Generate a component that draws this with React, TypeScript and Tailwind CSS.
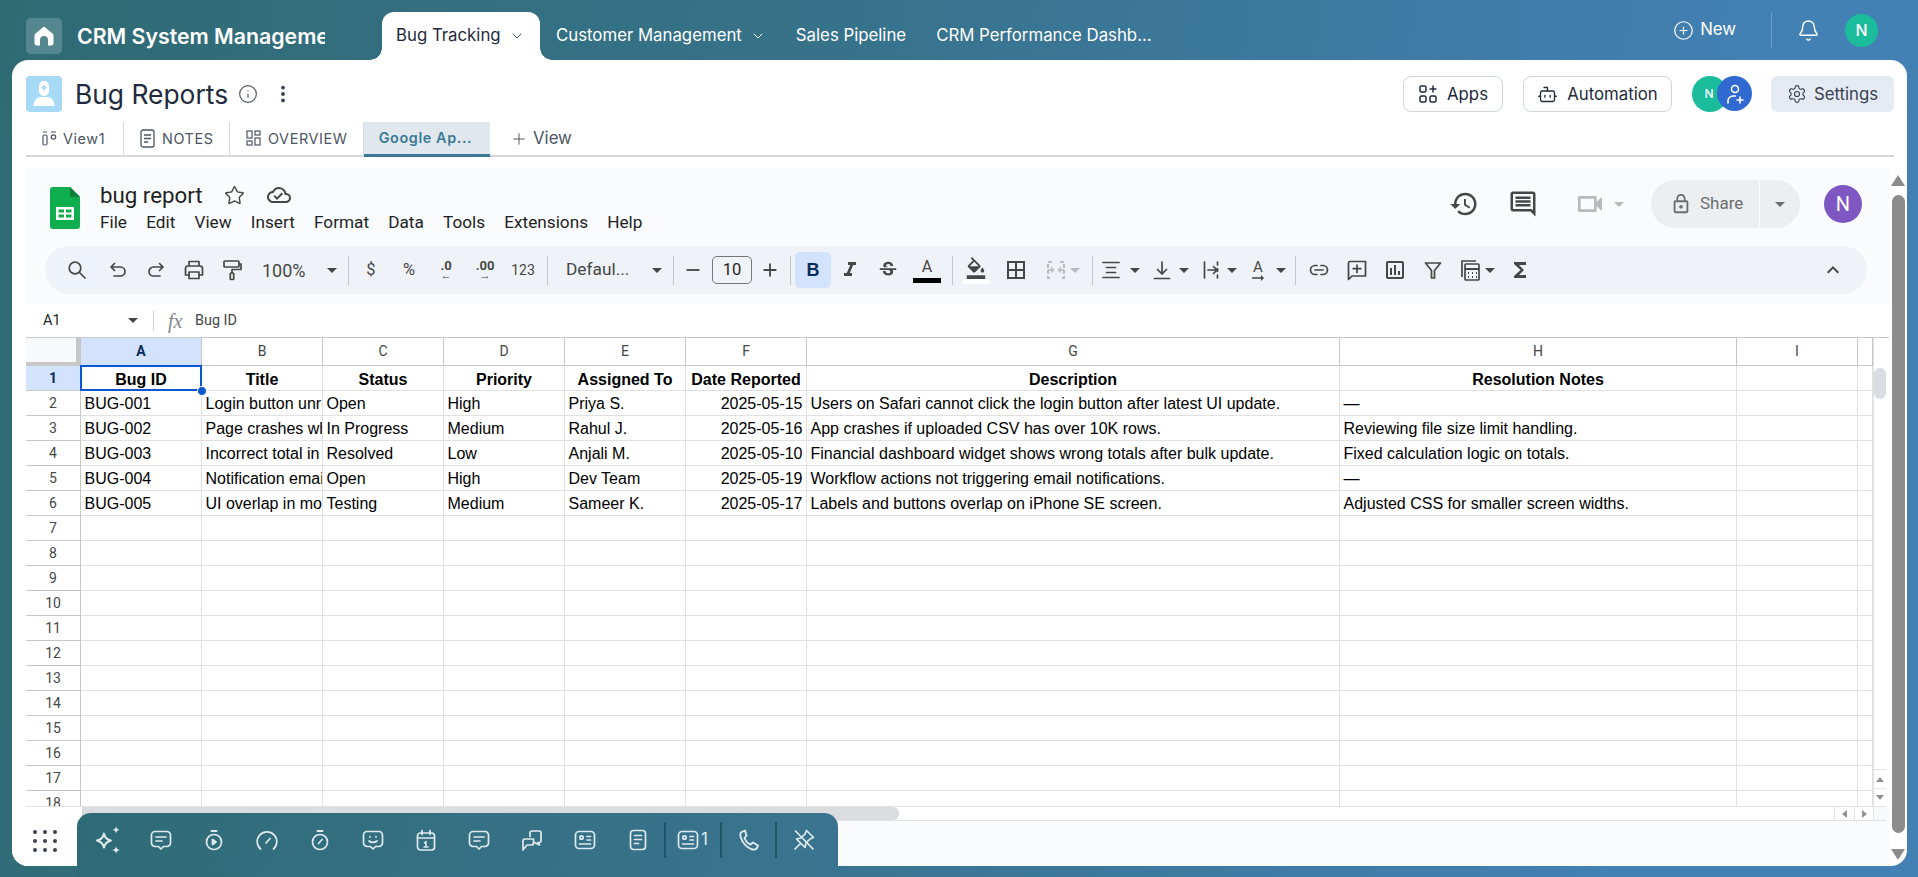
import React from "react";
import { Bell, Bot, ChevronDown, CirclePlus, EllipsisVertical, Info, Plus, Settings, Star } from "lucide-react";
import {
  MdFormatItalic, MdStrikethroughS, MdBorderAll, MdOutlineInsertChart, MdFunctions, MdExpandLess, MdHistory,
  MdOutlineComment, MdOutlineVideocam, MdLockOutline, MdOutlineCloudDone, MdOutlineFormatColorFill, MdRemove, MdAdd, MdArrowRightAlt,
} from "react-icons/md";

const rows: string[][] = [
  ["BUG-001", "Login button unresponsive", "Open", "High", "Priya S.", "2025-05-15", "Users on Safari cannot click the login button after latest UI update.", "—"],
  ["BUG-002", "Page crashes when uploading", "In Progress", "Medium", "Rahul J.", "2025-05-16", "App crashes if uploaded CSV has over 10K rows.", "Reviewing file size limit handling."],
  ["BUG-003", "Incorrect total in dashboard", "Resolved", "Low", "Anjali M.", "2025-05-10", "Financial dashboard widget shows wrong totals after bulk update.", "Fixed calculation logic on totals."],
  ["BUG-004", "Notification email not sent", "Open", "High", "Dev Team", "2025-05-19", "Workflow actions not triggering email notifications.", "—"],
  ["BUG-005", "UI overlap in mobile view", "Testing", "Medium", "Sameer K.", "2025-05-17", "Labels and buttons overlap on iPhone SE screen.", "Adjusted CSS for smaller screen widths."],
];
const headers = ["Bug ID", "Title", "Status", "Priority", "Assigned To", "Date Reported", "Description", "Resolution Notes"];
const letters = ["A", "B", "C", "D", "E", "F", "G", "H", "I", ""];
const gridCols = "grid grid-cols-[55px_121px_121px_121px_121px_121px_121px_533px_397px_121px_15px]";
const cell = "border-r border-b border-[#e1e1e1] h-[25px] overflow-hidden whitespace-nowrap px-[3.5px] text-[16px] leading-[26px] text-black";

const Arrow = ({ c = "#444746" }: { c?: string }) => (
  <svg width="10" height="5" viewBox="0 0 10 5" className="shrink-0"><path d="M0 0h10L5 5z" fill={c} /></svg>
);
const Divider = ({ cls }: { cls: string }) => <div className={`w-px h-[29px] bg-[#c7c7c7] shrink-0 ${cls}`} />;

const s = { fill: "none", stroke: "currentColor", strokeWidth: 1.7, strokeLinecap: "round", strokeLinejoin: "round" } as const;
const I = ({ children, size = 24 }: { children: React.ReactNode; size?: number }) => (
  <svg width={size} height={size} viewBox="0 0 24 24" {...s}>{children}</svg>
);

const TopTab = ({ label, chevron, cls }: { label: string; chevron?: boolean; cls: string }) => (
  <div className={`flex items-center gap-[8px] text-white text-[16.8px] h-[48px] ${cls}`}>
    <span>{label}</span>
    {chevron && <ChevronDown size={16} strokeWidth={1.5} />}
  </div>
);

const HeaderBtn = ({ icon, label, cls }: { icon: React.ReactNode; label: string; cls: string }) => (
  <div className={`h-[36px] flex items-center justify-center gap-[9px] rounded-[8px] border border-[#cfd4da] text-[16.8px] text-[#1f2a3c] ${cls}`}>
    {icon}
    <span className="mt-[1px]">{label}</span>
  </div>
);

const bubble = "M6 3.500h12a3.500 3.500 0 0 1 3.500 3.500v8a3.500 3.500 0 0 1-3.500 3.500h-3.500L12 21l-2.500-2.500H6A3.500 3.500 0 0 1 2.500 15V7A3.500 3.500 0 0 1 6 3.500z";
const DockItem = ({ children }: { children: React.ReactNode }) => (
  <div className="flex items-center w-[53px] justify-center shrink-0">{children}</div>
);
const IdCard = () => (
  <I><rect x="2.500" y="3.500" width="19" height="17" rx="3.500" /><circle cx="8.500" cy="9.500" r="1.700" /><path d="M14 8.500h3.500M14 12h3.500M6.500 16h11" /></I>
);

const Dock = () => (
  <div className="absolute left-[77px] top-[813px] w-[761px] h-[64px] rounded-t-[14px] bg-[linear-gradient(100deg,#2f6b76,#3a7490)] flex items-center text-[#dfeaee] pb-[10px]">
    <svg width="30" height="30" viewBox="0 0 26 26" className="shrink-0 ml-[16px]" fill="none">
      <path d="M9.500 7.500c.8 3.500 2.300 5 6 6-3.700 1-5.200 2.500-6 6-.8-3.500-2.300-5-6-6 3.700-1 5.200-2.500 6-6z" stroke="currentColor" strokeWidth="1.800" strokeLinejoin="round" />
      <path d="M20 1c.4 2 1.200 2.800 3.200 3.200C21.200 4.600 20.400 5.400 20 7.400c-.4-2-1.200-2.800-3.200-3.200C18.800 3.800 19.600 3 20 1zM20 18.500c.4 2 1.200 2.800 3.200 3.200-2 .4-2.800 1.200-3.200 3.200-.4-2-1.200-2.800-3.200-3.200 2-.4 2.800-1.200 3.200-3.200z" fill="currentColor" />
    </svg>
    <div className="w-[11px] shrink-0" />
    <DockItem><I><path d={bubble} /><path d="M7 9h10M7 13h6" /></I></DockItem>
    <DockItem><I><circle cx="12" cy="14" r="7.500" /><path d="M9.500 3h5" strokeWidth="2" /><path d="M10.500 11.500l3.500 2.500-3.500 2.500z" fill="currentColor" /></I></DockItem>
    <DockItem><I><path d="M5.500 21a9.800 9.800 0 1 1 13 0" /><path d="M11 15l4-4.500" /></I></DockItem>
    <DockItem><I><circle cx="12" cy="14" r="7.500" /><path d="M9.500 3h5" strokeWidth="2" /><path d="M10.500 15.500l3.500-4" /></I></DockItem>
    <DockItem><I><path d={bubble} /><path d="M8 13c2 1.800 6 1.800 8 0M9 8.500v.5M15 8.500v.5" /></I></DockItem>
    <DockItem><I><rect x="3.500" y="5" width="17" height="17" rx="3" /><path d="M8 2.500v4M16 2.500v4M3.500 10h17" /><path d="M12 13.500v5.500M10.500 15l1.500-1.500M10 19h4" strokeWidth="1.500" /></I></DockItem>
    <DockItem><I><path d={bubble} /><path d="M7 9h10M7 13h6" /></I></DockItem>
    <DockItem><I><path d="M10 8.500V5a2 2 0 0 1 2-2h7a2 2 0 0 1 2 2v8a1.500 1.500 0 0 1-1.500 1.500H18l1.500 2.500-5-2.500" /><path d="M3 22v-9a2 2 0 0 1 2-2h8.500v4a2 2 0 0 1-2 2H7z" /></I></DockItem>
    <DockItem><IdCard /></DockItem>
    <DockItem><I><rect x="4.500" y="2.500" width="15" height="19" rx="3" /><path d="M8.500 7.500h7M8.500 11.500h7M8.500 15.500h4" /></I></DockItem>
    <div className="w-[2px] h-[36px] bg-[#1f5568] shrink-0" />
    <div className="flex items-center w-[54px] pl-[10px] shrink-0 text-[17px]"><IdCard /><span className="ml-px font-['Inter',sans-serif]">1</span></div>
    <div className="w-[2px] h-[36px] bg-[#1f5568] shrink-0" />
    <DockItem><svg width="24" height="24" viewBox="0 0 24 24" {...s} strokeWidth="1.900"><path d="M8 2.500 4.500 4C3 5 3 7 4 10c2 5.500 5.500 9 10 11 3 1 5 1 6-1l1-2.500-5-3-2.500 2c-2.500-1-5-4-6-6.500l2-2.500z" /></svg></DockItem>
    <div className="w-[2px] h-[36px] bg-[#1f5568] shrink-0" />
    <div className="flex items-center w-[54px] justify-center shrink-0"><I><path d="M3.500 3 21 21" /><path d="M14.500 2.500l7 7-3.500 1.500-4 4-1 4.500L4.500 11l4.500-1 4-4z" /><path d="M8.500 15.500 3 21" /></I></div>
  </div>
);

export default function App() {
  return (
    <div className="relative w-[1918px] h-[877px] overflow-hidden bg-[linear-gradient(100deg,#2f6b73_0%,#37728a_40%,#4380b3_85%)] font-['Inter',sans-serif]">
      {/* top bar */}
      <div className="h-[60px] flex items-end pl-[26px]">
        <div className="self-start mt-[18px] w-[36px] h-[36px] rounded-[5px] bg-[#55878f] flex items-center justify-center shrink-0">
          <svg width="24" height="24" viewBox="0 0 24 24" fill="#fff"><path d="M12 2.500 3.500 9.500c-.6.500-1 1-1 1.800V19a2.500 2.500 0 0 0 2.500 2.500h3V16a4 4 0 0 1 8 0v5.500h3a2.500 2.500 0 0 0 2.500-2.500v-7.700c0-.8-.4-1.300-1-1.800z" /></svg>
        </div>
        <div className="self-start mt-[22px] ml-[15px] w-[248px] overflow-hidden whitespace-nowrap text-white text-[21.3px] font-semibold leading-[28px] shrink-0">CRM System Management</div>
        <div className="relative ml-[57px] w-[158px] h-[48px] bg-white rounded-t-[12px] flex items-center pl-[14px] gap-[8px] text-[16.8px] text-[#1f2a3c] shrink-0">
          <span className="absolute -left-[12px] bottom-0 w-[12px] h-[12px] bg-[radial-gradient(circle_at_0_0,transparent_11.500px,#fff_12px)]" />
          <span className="absolute -right-[12px] bottom-0 w-[12px] h-[12px] bg-[radial-gradient(circle_at_100%_0,transparent_11.500px,#fff_12px)]" />
          Bug Tracking
          <ChevronDown size={16} strokeWidth={1.5} className="text-[#4b5563]" />
        </div>
        <TopTab label="Customer Management" chevron cls="ml-[16px]" />
        <TopTab label="Sales Pipeline" cls="ml-[30px]" />
        <TopTab label="CRM Performance Dashb..." cls="ml-[30px]" />
        <div className="ml-auto flex items-center text-white h-[60px] self-start">
          <CirclePlus size={21} strokeWidth={1.4} />
          <span className="ml-[6px] text-[16.8px]">New</span>
          <div className="ml-[35px] w-px h-[36px] bg-[#6f9cc1]" />
          <Bell size={23} strokeWidth={1.5} className="ml-[25px]" />
          <div className="ml-[25px] mr-[40px] w-[33px] h-[33px] rounded-full bg-[#1abc9c] flex items-center justify-center text-[16px] font-medium">N</div>
        </div>
      </div>

      {/* main panel */}
      <div className="ml-[12px] w-[1895px] h-[806px] bg-white rounded-[16px] flex flex-col">
        <div className="h-[36px] mt-[16px] pl-[14px] pr-[13px] flex items-center shrink-0">
          <div className="w-[36px] h-[36px] rounded-[4px] bg-[#a6daf7] flex items-center justify-center">
            <svg width="24" height="28" viewBox="0 0 24 28" fill="#fff"><path d="M7 6a5 5 0 0 1 10 0v5a5 5 0 0 1-10 0z" /><path d="M1.500 26c0-6 4-9 7-9h7c3 0 7 3 7 9z" /><path d="M11 5h2v2h2v1.500h-2v2h-2v-2H9V7h2z" fill="#a6daf7" /></svg>
          </div>
          <span className="ml-[13px] text-[26.4px] text-[#1f2a3c] leading-[36px]">Bug Reports</span>
          <Info size={20} strokeWidth={1.4} className="ml-[10px] text-[#4b5563]" />
          <EllipsisVertical size={22} strokeWidth={2.2} className="ml-[14px] text-[#374151]" />
          <div className="ml-auto flex items-center">
            <HeaderBtn cls="w-[100px]" label="Apps" icon={<svg width="20" height="20" viewBox="0 0 20 20" fill="none" stroke="currentColor" strokeWidth="1.5"><rect x="2" y="2" width="6" height="6" rx="1.500" /><rect x="2" y="12" width="6" height="6" rx="1.500" /><rect x="12" y="12" width="6" height="6" rx="1.500" /><path d="M15 1.500v7M11.500 5h7" /></svg>} />
            <HeaderBtn cls="w-[149px] ml-[20px]" label="Automation" icon={<Bot size={21} strokeWidth={1.5} />} />
            <div className="ml-[20px] relative w-[60px] h-[36px]">
              <div className="absolute left-0 top-0 w-[36px] h-[36px] rounded-full bg-[#1abc9c] text-white text-[12px] font-medium flex items-center justify-center pr-[2px]">N</div>
              <div className="absolute left-[25px] top-0 w-[35px] h-[35px] rounded-full bg-[#3069d0] flex items-center justify-center">
                <svg width="24" height="24" viewBox="0 0 24 24" fill="none" stroke="#fff" strokeWidth="1.600" strokeLinecap="round"><circle cx="12" cy="7" r="3.500" /><path d="M5 21v-2a5 5 0 0 1 5-5h2.500M17 15v6M14 18h6" /></svg>
              </div>
            </div>
            <div className="ml-[19px] w-[123px] h-[36px] rounded-[6px] bg-[#e6ebf3] flex items-center justify-center gap-[7px] text-[16.8px] text-[#374151]">
              <Settings size={20} strokeWidth={1.4} /><span className="mt-[1px]">Settings</span>
            </div>
          </div>
        </div>
        {/* view tabs */}
        <div className="mt-[9px] ml-[14px] mr-[13px] h-[36px] flex border-b-2 border-[#d5d8dd] text-[14.4px] tracking-[0.6px] text-[#4b5563] shrink-0 pt-[1px]">
          <div className="w-[98px] flex items-center pl-[16px] gap-[6px] border-r border-[#d5d8dd]"><svg width="15" height="17" viewBox="0 0 15 17" fill="none" stroke="currentColor" strokeWidth="1.200"><rect x="1" y="5" width="4" height="10" rx="1.500" /><path d="M1 2h4M9 2h5" /><circle cx="11.500" cy="7" r="2.200" /></svg>View1</div>
          <div className="w-[106px] flex items-center pl-[16px] gap-[7px] border-r border-[#d5d8dd]"><svg width="15" height="19" viewBox="0 0 15 19" fill="none" stroke="currentColor" strokeWidth="1.300"><rect x="1" y="1" width="13" height="17" rx="2" /><path d="M4 6h7M4 9.500h7M4 13h4" /></svg>NOTES</div>
          <div className="w-[134px] flex items-center pl-[16px] gap-[7px] border-r border-[#d5d8dd]"><svg width="15" height="17" viewBox="0 0 15 17" fill="none" stroke="currentColor" strokeWidth="1.200"><rect x="1" y="1" width="5" height="7" /><rect x="9" y="1" width="5" height="4" /><rect x="1" y="11" width="5" height="4" /><rect x="9" y="8" width="5" height="7" /></svg>OVERVIEW</div>
          <div className="w-[126px] flex items-center justify-center pr-[3px] bg-[#e0e8ee] border-b-[3px] border-[#3b7a96] -mb-[2px] text-[#3b7a96] font-semibold">Google Ap...</div>
          <div className="ml-[20px] flex items-center gap-[5px] text-[16.8px] tracking-normal"><Plus size={18} strokeWidth={1.3} />View</div>
        </div>

        {/* embed + page scrollbar */}
        <div className="mt-[11px] ml-[14px] flex-1 flex min-h-0">
          <div className="w-[1863px] bg-[#f9fbfd] flex flex-col font-['Roboto',sans-serif]">
            {/* sheet header */}
            <div className="h-[78px] flex shrink-0 text-[#1f1f1f]">
              <svg width="30" height="42" viewBox="0 0 30 42" className="ml-[24px] mt-[19px] shrink-0">
                <path d="M3 0h17l10 10v29a3 3 0 0 1-3 3H3a3 3 0 0 1-3-3V3a3 3 0 0 1 3-3z" fill="#0ead4e" />
                <path d="M20 0l10 10H20z" fill="#0a7f39" />
                <path d="M6 20h18v13H6z" fill="#fff" />
                <path d="M8.500 22.500h5.500v3H8.500zM16 22.500h5.500v3H16zM8.500 27.500h5.500v3H8.500zM16 27.500h5.500v3H16z" fill="#0ead4e" />
              </svg>
              <div className="ml-[20px] flex flex-col">
                <div className="flex items-center mt-[14px] h-[26px]">
                  <span className="text-[22.3px] leading-[26px]">bug report</span>
                  <Star size={21} strokeWidth={1.6} className="ml-[21px] text-[#444746]" />
                  <MdOutlineCloudDone size={24} className="ml-[22px] text-[#444746]" />
                </div>
                <div className="flex gap-[19.2px] text-[17.2px] leading-[24px] mt-[2px] text-[#1f1f1f]">
                  {["File", "Edit", "View", "Insert", "Format", "Data", "Tools", "Extensions", "Help"].map((m) => <span key={m}>{m}</span>)}
                </div>
              </div>
              <div className="ml-auto flex items-center pb-[6px] text-[#444746]">
                <MdHistory size={30} />
                <MdOutlineComment size={30} className="ml-[29px]" />
                <MdOutlineVideocam size={32} className="ml-[36px] text-[#b8babc]" />
                <div className="ml-[8px]"><Arrow c="#b8babc" /></div>
                <div className="ml-[27px] w-[149px] h-[48px] rounded-full bg-[#eceef0] flex items-center">
                  <div className="w-[109px] h-full flex items-center pl-[19px] gap-[8px] border-r border-[#fafafa] text-[#6b6e70] text-[17px]"><MdLockOutline size={22} />Share</div>
                  <div className="flex-1 flex justify-center"><Arrow c="#6b6e70" /></div>
                </div>
                <div className="ml-[24px] mr-[27px] w-[38px] h-[38px] rounded-full bg-[#7e57c2] text-white text-[20px] flex items-center justify-center">N</div>
              </div>
            </div>

            {/* toolbar */}
            <div className="ml-[19px] w-[1822px] h-[48px] rounded-full bg-[#eff3f8] flex items-center pl-[12px] pr-[22px] text-[#444746] shrink-0">
              <div className="w-[40px] h-[36px] flex items-center justify-center shrink-0 rounded-[4px] bg-[#eef2fa]"><I><circle cx="10" cy="10" r="5.800" /><path d="M14.500 14.500 20 20" /></I></div>
              <div className="ml-[2px] w-[38px] flex justify-center shrink-0"><I><path d="M8.500 5.500 5 9l3.500 3.500M5.500 9h9a4.500 4.500 0 0 1 0 9H8" /></I></div>
              <div className="w-[38px] flex justify-center shrink-0"><I><path d="M15.500 5.500 19 9l-3.500 3.500M18.500 9h-9a4.500 4.500 0 0 0 0 9H16" /></I></div>
              <div className="w-[38px] flex justify-center shrink-0"><I><path d="M7 8V3.500h10V8M7 17H3.500v-6.500a2.500 2.500 0 0 1 2.500-2.500h12a2.500 2.500 0 0 1 2.500 2.500V17H17" /><rect x="7" y="14" width="10" height="6.500" /></I></div>
              <div className="w-[38px] flex justify-center shrink-0"><I><rect x="4" y="3" width="15" height="6" rx="1" /><path d="M19 6h2v5.500h-9V15" /><rect x="10.300" y="15" width="3.400" height="6.500" rx="0.800" /></I></div>
              <div className="ml-[11px] w-[75px] flex items-center justify-between shrink-0 text-[18px]">100%<Arrow /></div>
              <Divider cls="ml-[11px]" />
              <div className="ml-[3px] w-[38px] text-center shrink-0 text-[16.5px]">$</div>
              <div className="w-[38px] text-center shrink-0 text-[16.5px]">%</div>
              <div className="w-[36px] flex flex-col items-center shrink-0 leading-[11px] text-[13px] font-bold"><span>.0</span><span className="text-[11px] -mt-[1px]">←</span></div>
              <div className="ml-[2px] w-[38px] flex flex-col items-center shrink-0 leading-[11px] text-[13px] font-bold"><span>.00</span><span className="text-[11px] -mt-[1px]">→</span></div>
              <div className="w-[38px] text-center shrink-0 text-[14px]">123</div>
              <Divider cls="ml-[5px]" />
              <div className="ml-[18px] w-[96px] flex items-center justify-between shrink-0 text-[17.3px]">Defaul...<Arrow /></div>
              <Divider cls="ml-[11px]" />
              <div className="w-[38px] flex justify-center shrink-0"><MdRemove size={22} /></div>
              <div className="w-[40px] h-[28px] rounded-[5px] border border-[#747775] flex items-center justify-center text-[16.5px] text-[#1f1f1f] shrink-0">10</div>
              <div className="w-[36px] flex justify-center shrink-0"><MdAdd size={22} /></div>
              <Divider cls="ml-[2px]" />
              <div className="ml-[4px] w-[36px] h-[36px] rounded-[5px] bg-[#d3e3fd] flex items-center justify-center text-[#0b2a5c] font-bold text-[18px] shrink-0 font-['Liberation_Sans',sans-serif]">B</div>
              <div className="w-[38px] flex justify-center shrink-0"><MdFormatItalic size={24} /></div>
              <div className="w-[38px] flex justify-center shrink-0"><MdStrikethroughS size={22} /></div>
              <div className="w-[40px] flex flex-col items-center shrink-0 leading-[18px] text-[16px]">A<span className="w-[28px] h-[5px] bg-black mt-[2px]" /></div>
              <Divider cls="ml-[5px]" />
              <div className="w-[46px] flex flex-col items-center shrink-0"><MdOutlineFormatColorFill size={22} /><span className="w-[27px] h-[5px] bg-white" /></div>
              <div className="w-[34px] flex justify-center shrink-0"><MdBorderAll size={24} /></div>
              <div className="w-[58px] flex items-center shrink-0 pl-[11px] gap-[2px] text-[#b9bbbd]">
                <svg width="24" height="24" viewBox="0 0 24 24" fill="none" stroke="currentColor" strokeWidth="2"><path d="M8 4H4v16h4M16 4h4v16h-4" strokeDasharray="4 2" /><path d="M4 12h5M7 9.500 9.500 12 7 14.500M20 12h-5M17 9.500 14.500 12 17 14.500" strokeWidth="1.500" /></svg>
                <Arrow c="#b9bbbd" />
              </div>
              <Divider cls="ml-[1px]" />
              <div className="ml-[6px] flex items-center gap-[7px] shrink-0"><I><path d="M4 4.500h16M7.500 9.500h9M7.500 14.500h9M4 19.500h16" /></I><Arrow /></div>
              <div className="ml-[10px] flex items-center gap-[5px] shrink-0"><I><path d="M12 4v12M7.500 11.500 12 16l4.500-4.500M4.500 20.500h15" /></I><Arrow /></div>
              <div className="ml-[10px] flex items-center gap-[4px] shrink-0">
                <I><path d="M5.500 4v16M18.500 4v3M18.500 10.500v3M18.500 17v3M9 12h9M14.500 8.500 18 12l-3.500 3.500" /></I>
                <Arrow />
              </div>
              <div className="ml-[9px] flex items-center gap-[6px] shrink-0">
                <div className="w-[24px] flex flex-col items-center text-[15px] leading-[15px]">A<span className="-mt-[6px] h-[12px]"><MdArrowRightAlt size={18} /></span></div>
                <Arrow />
              </div>
              <Divider cls="ml-[9px]" />
              <div className="ml-[4px] w-[38px] flex justify-center shrink-0"><I><path d="M10 7.500H8a4.500 4.500 0 0 0 0 9h2M14 7.500h2a4.500 4.500 0 0 1 0 9h-2M8 12h8" /></I></div>
              <div className="w-[38px] flex justify-center shrink-0"><I><path d="M3.500 21.500V5a1.500 1.500 0 0 1 1.500-1.500h15.500v14.500H7z" /><path d="M12 7v7.500M8.200 10.700h7.600" /></I></div>
              <div className="w-[38px] flex justify-center shrink-0"><MdOutlineInsertChart size={24} /></div>
              <div className="w-[38px] flex justify-center shrink-0">
                <I><path d="M4.500 5h15l-6 7.500V20h-3v-7.500z" /></I>
              </div>
              <div className="ml-[6px] flex items-center gap-[3px] shrink-0">
                <svg width="24" height="24" viewBox="0 0 24 24" fill="none" stroke="currentColor" strokeWidth="1.700"><path d="M4 19V3h14" /><rect x="7" y="6" width="14" height="16" rx="1" /><path d="M7 11h14M10 15h1M14 15h1M18 15h1M10 19h1M14 19h1M18 19h1" strokeWidth="2" /></svg>
                <Arrow />
              </div>
              <div className="ml-[13px] shrink-0"><MdFunctions size={24} /></div>
              <div className="ml-auto"><MdExpandLess size={24} /></div>
            </div>

            <div className="h-[10px] shrink-0" />

            {/* formula bar */}
            <div className="h-[33px] bg-white flex items-center shrink-0 text-[#1f1f1f]">
              <span className="ml-[17px] w-[85px] text-[14.5px]">A1</span>
              <Arrow />
              <div className="ml-[15px] w-px h-[20px] bg-[#d0d2d4]" />
              <span className="ml-[14px] w-[27px] text-[20px] italic text-[#80868b] font-['Liberation_Serif',serif]">fx</span>
              <span className="text-[14.4px] text-[#444746]">Bug ID</span>
            </div>

            {/* grid */}
            <div className="h-[469px] bg-white flex overflow-hidden border-t border-[#c7c7c7] shrink-0">
              <div className="w-[1847px] shrink-0 overflow-hidden">
                <div className={gridCols}>
                  <div className="h-[28px] bg-[#f8f9fa] border-r-[5px] border-b-[4px] border-[#c7c7c7]" />
                  {letters.map((l, i) => (
                    <div key={l + i} className={`h-[28px] border-r border-b border-[#c7c7c7] flex items-center justify-center text-[14px] ${i === 0 ? "bg-[#d3e3fd] font-bold text-[#0b2a5c]" : "text-[#444746]"}`}>{l}</div>
                  ))}
                  <div className="h-[25px] bg-[#d3e3fd] border-r border-b border-[#c7c7c7] flex items-center justify-center text-[14px] font-bold text-[#0b2a5c]">1</div>
                  {headers.map((h, i) => (
                    <div key={h} className={`relative ${cell} !px-0 pt-[1px] text-center font-bold font-['Liberation_Sans',sans-serif] ${i === 0 ? "!overflow-visible z-10" : ""}`}>
                      {h}
                      {i === 0 && <span className="absolute -left-px -top-px -right-px -bottom-px border-2 border-[#0b57d0]" />}
                      {i === 0 && <span className="absolute -right-[6px] -bottom-[6px] w-[10px] h-[10px] rounded-full bg-[#0b57d0] border border-white" />}
                    </div>
                  ))}
                  <div className={cell} />
                  <div className={cell} />
                  {Array.from({ length: 17 }).map((_, r) => {
                    const row = rows[r];
                    return (
                      <React.Fragment key={r}>
                        <div className="h-[25px] border-r border-b border-[#c7c7c7] flex items-center justify-center text-[14px] text-[#444746]">{r + 2}</div>
                        {Array.from({ length: 10 }).map((__, c) => (
                          <div key={c} className={`${cell} font-['Liberation_Sans',sans-serif] ${c === 5 ? "text-right" : ""}`}>{row?.[c] ?? ""}</div>
                        ))}
                      </React.Fragment>
                    );
                  })}
                </div>
              </div>
              <div className="w-[13px] flex flex-col shrink-0 text-[#80868b] border-l border-[#e1e1e1]">
                <div className="h-[30px] shrink-0" />
                <div className="h-[31px] bg-[#dadce0] rounded-[6px] shrink-0" />
                <div className="flex-1" />
                <div className="h-[19px] flex items-center justify-center border-t border-[#e1e1e1] shrink-0"><svg width="8" height="5" viewBox="0 0 8 5"><path d="M4 0l4 5H0z" fill="#909090" /></svg></div>
                <div className="h-[18px] flex items-center justify-center border-t border-[#e1e1e1] shrink-0"><svg width="8" height="5" viewBox="0 0 8 5"><path d="M0 0h8L4 5z" fill="#909090" /></svg></div>
              </div>
            </div>

            {/* horizontal scrollbar */}
            <div className="h-[15px] bg-white flex border-t border-b border-[#e1e1e1] shrink-0 w-[1860px]">
              <div className="ml-[56px] w-[817px] h-[13px] bg-[#dadce0] rounded-r-[6px] shrink-0" />
              <div className="ml-auto flex shrink-0">
                <div className="w-[20px] border-l border-[#e1e1e1] flex items-center justify-center"><svg width="5" height="8" viewBox="0 0 5 8"><path d="M5 0v8L0 4z" fill="#909090" /></svg></div>
                <div className="w-[19px] border-l border-[#e1e1e1] flex items-center justify-center"><svg width="5" height="8" viewBox="0 0 5 8"><path d="M0 0v8l5-4z" fill="#909090" /></svg></div>
                <div className="w-[13px] border-l border-[#e1e1e1] bg-[#f8f9fa]" />
              </div>
            </div>
          </div>

          {/* page scrollbar */}
          <div className="w-[18px] flex flex-col items-center rounded-br-[16px] shrink-0">
            <svg width="14" height="11" viewBox="0 0 14 11" className="mt-[7px]"><path d="M7 0l7 11H0z" fill="#8c8c8c" /></svg>
            <div className="mt-[9px] w-[13px] h-[638px] bg-[#8c8c8c] rounded-[7px]" />
            <svg width="14" height="11" viewBox="0 0 14 11" className="mt-[16px]"><path d="M0 0h14L7 11z" fill="#8c8c8c" /></svg>
          </div>
        </div>
      </div>

      {/* launcher + dock */}
      <div className="absolute left-[12px] top-[813px] w-[65px] h-[53px] bg-white rounded-bl-[16px] grid grid-cols-3 gap-[5px] place-items-center content-center px-[20px] pt-[2px]">
        {Array.from({ length: 9 }).map((_, i) => <span key={i} className="w-[4px] h-[4px] rounded-full bg-[#3a4252]" />)}
      </div>
      <Dock />
    </div>
  );
}
